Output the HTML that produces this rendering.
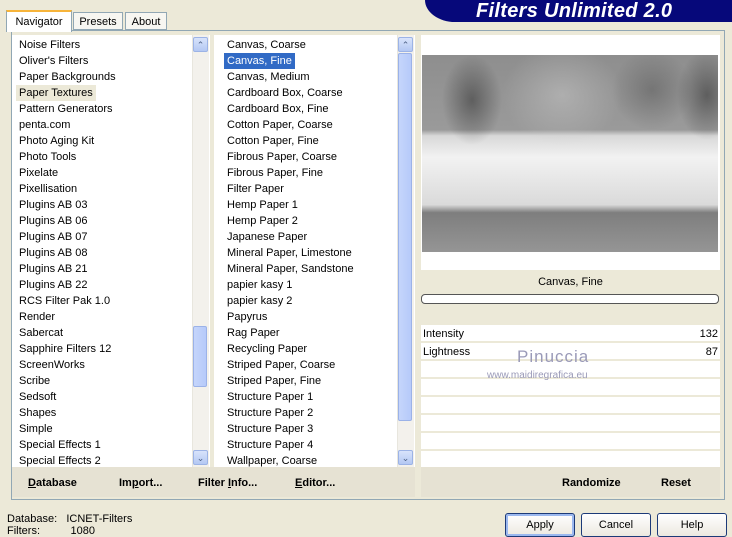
<html><head><style>
body{margin:0;width:732px;height:534px;background:#ECE9D8;position:relative;overflow:hidden;font-family:"Liberation Sans",sans-serif;font-size:11px;color:#000}
.a{position:absolute}
.it{position:absolute;left:0;height:16px;line-height:16px;white-space:nowrap}
.sb{position:absolute;width:16px;background:#F3F1EC;border-left:1px solid #E8E6DE}
.btn{position:absolute;width:15px;height:15px;background:linear-gradient(#d8e3fb,#b4c8f3);border:1px solid #9cb3e6;border-radius:2px;color:#4d6185;font-size:9px;text-align:center;line-height:15px;box-sizing:border-box}
.th{position:absolute;width:14px;background:linear-gradient(90deg,#c5d5fb,#b6cafa);border:1px solid #9bb2e8;border-radius:2px;box-sizing:border-box}
.b{font-weight:bold;position:absolute;top:477px}
.row{position:absolute;left:421px;width:299px;height:16px;background:#fff;border-bottom:2px solid #ECE9D8}
.pb{position:absolute;top:513px;height:24px;width:70px;border:1px solid #1c3a78;border-radius:3px;background:linear-gradient(#fff,#ece9e0);text-align:center;line-height:22px;box-sizing:border-box}
</style></head><body>
<div class="a" style="left:425px;top:0;width:307px;height:22px;background:#06087a;border-bottom-left-radius:30px 22px"></div>
<div class="a" style="left:476px;top:0px;color:#fff;font:italic bold 20px 'Liberation Sans',sans-serif;letter-spacing:0.3px">Filters Unlimited 2.0</div>
<div class="a" style="left:11px;top:30px;width:714px;height:470px;border:1px solid #91A7B4;background:#ECE9D8;box-sizing:border-box"></div>
<div class="a" style="left:6px;top:10px;width:66px;height:22px;background:#fff;border:1px solid #91A7B4;border-bottom:none;border-top:2px solid #F7B43A;text-align:center;line-height:20px;box-sizing:border-box">Navigator</div>
<div class="a" style="left:73px;top:12px;width:50px;height:18px;background:#f7f6f1;border:1px solid #91A7B4;text-align:center;line-height:18px;box-sizing:border-box">Presets</div>
<div class="a" style="left:125px;top:12px;width:42px;height:18px;background:#f7f6f1;border:1px solid #91A7B4;text-align:center;line-height:18px;box-sizing:border-box">About</div>
<div class="a" style="left:12px;top:35px;width:198px;height:432px;background:#fff;overflow:hidden">
<div class="a" style="left:7px;top:2px;width:180px">
<div class="it" style="top:0">Noise Filters</div><div class="it" style="top:16px">Oliver's Filters</div><div class="it" style="top:32px">Paper Backgrounds</div><div class="it" style="top:48px;background:#ECE9D8;padding:0 3px;left:-3px">Paper Textures</div><div class="it" style="top:64px">Pattern Generators</div><div class="it" style="top:80px">penta.com</div><div class="it" style="top:96px">Photo Aging Kit</div><div class="it" style="top:112px">Photo Tools</div><div class="it" style="top:128px">Pixelate</div><div class="it" style="top:144px">Pixellisation</div><div class="it" style="top:160px">Plugins AB 03</div><div class="it" style="top:176px">Plugins AB 06</div><div class="it" style="top:192px">Plugins AB 07</div><div class="it" style="top:208px">Plugins AB 08</div><div class="it" style="top:224px">Plugins AB 21</div><div class="it" style="top:240px">Plugins AB 22</div><div class="it" style="top:256px">RCS Filter Pak 1.0</div><div class="it" style="top:272px">Render</div><div class="it" style="top:288px">Sabercat</div><div class="it" style="top:304px">Sapphire Filters 12</div><div class="it" style="top:320px">ScreenWorks</div><div class="it" style="top:336px">Scribe</div><div class="it" style="top:352px">Sedsoft</div><div class="it" style="top:368px">Shapes</div><div class="it" style="top:384px">Simple</div><div class="it" style="top:400px">Special Effects 1</div><div class="it" style="top:416px">Special Effects 2</div>
</div>
<div class="sb" style="left:180px;top:0;height:432px"></div>
<div class="btn" style="left:181px;top:2px">&#8963;</div>
<div class="th" style="left:181px;top:291px;height:61px"></div>
<div class="btn" style="left:181px;top:415px">&#8964;</div>
</div>
<div class="a" style="left:214px;top:35px;width:201px;height:432px;background:#fff;overflow:hidden">
<div class="a" style="left:13px;top:2px;width:180px">
<div class="it" style="top:0">Canvas, Coarse</div><div class="it" style="top:16px;background:#316AC5;color:#fff;padding:0 3px;left:-3px">Canvas, Fine</div><div class="it" style="top:32px">Canvas, Medium</div><div class="it" style="top:48px">Cardboard Box, Coarse</div><div class="it" style="top:64px">Cardboard Box, Fine</div><div class="it" style="top:80px">Cotton Paper, Coarse</div><div class="it" style="top:96px">Cotton Paper, Fine</div><div class="it" style="top:112px">Fibrous Paper, Coarse</div><div class="it" style="top:128px">Fibrous Paper, Fine</div><div class="it" style="top:144px">Filter Paper</div><div class="it" style="top:160px">Hemp Paper 1</div><div class="it" style="top:176px">Hemp Paper 2</div><div class="it" style="top:192px">Japanese Paper</div><div class="it" style="top:208px">Mineral Paper, Limestone</div><div class="it" style="top:224px">Mineral Paper, Sandstone</div><div class="it" style="top:240px">papier kasy 1</div><div class="it" style="top:256px">papier kasy 2</div><div class="it" style="top:272px">Papyrus</div><div class="it" style="top:288px">Rag Paper</div><div class="it" style="top:304px">Recycling Paper</div><div class="it" style="top:320px">Striped Paper, Coarse</div><div class="it" style="top:336px">Striped Paper, Fine</div><div class="it" style="top:352px">Structure Paper 1</div><div class="it" style="top:368px">Structure Paper 2</div><div class="it" style="top:384px">Structure Paper 3</div><div class="it" style="top:400px">Structure Paper 4</div><div class="it" style="top:416px">Wallpaper, Coarse</div>
</div>
<div class="sb" style="left:183px;top:0;height:432px"></div>
<div class="btn" style="left:184px;top:2px">&#8963;</div>
<div class="th" style="left:184px;top:18px;height:368px"></div>
<div class="btn" style="left:184px;top:415px">&#8964;</div>
</div>
<div class="a" style="left:421px;top:35px;width:299px;height:235px;background:#fff"></div>
<div class="a" style="left:422px;top:55px;width:296px;height:197px;background:
radial-gradient(ellipse 30px 45px at 50px 45px,rgba(40,40,40,.5),transparent),
radial-gradient(ellipse 30px 45px at 285px 40px,rgba(40,40,40,.5),transparent),
radial-gradient(ellipse 40px 40px at 230px 35px,rgba(60,60,60,.35),transparent),
radial-gradient(ellipse 60px 50px at 140px 40px,rgba(200,200,200,.5),transparent),
linear-gradient(#8e8e8e 0,#9a9a9a 38%,#d8d8d8 41%,#f2f2f2 52%,#dadada 76%,#7e7e7e 80%,#959595 100%)"></div>
<div class="a" style="left:421px;top:270px;width:299px;height:55px;background:#ECE9D8"></div>
<div class="a" style="left:421px;top:276px;width:299px;text-align:center">Canvas, Fine</div>
<div class="a" style="left:421px;top:294px;width:298px;height:10px;background:#fff;border:1px solid #555;border-radius:4px;box-sizing:border-box"></div>
<div class="row" style="top:325px"></div><div class="row" style="top:343px"></div><div class="row" style="top:361px"></div><div class="row" style="top:379px"></div><div class="row" style="top:397px"></div><div class="row" style="top:415px"></div><div class="row" style="top:433px"></div><div class="row" style="top:451px"></div>
<div class="a" style="left:423px;top:328px">Intensity</div><div class="a" style="left:690px;top:328px;width:28px;text-align:right">132</div>
<div class="a" style="left:423px;top:346px">Lightness</div><div class="a" style="left:690px;top:346px;width:28px;text-align:right">87</div>
<div class="a" style="left:517px;top:347px;color:#9a9ab8;font-size:17px;letter-spacing:1px">Pinuccia</div>
<div class="a" style="left:487px;top:370px;color:#9a9ab8;font-size:10px">www.maidiregrafica.eu</div>
<div class="a" style="left:12px;top:467px;width:403px;height:30px;background:#E6E2D3"></div>
<div class="a" style="left:421px;top:467px;width:299px;height:30px;background:#E6E2D3"></div>
<div class="b" style="left:28px"><u>D</u>atabase</div>
<div class="b" style="left:119px">Im<u>p</u>ort...</div>
<div class="b" style="left:198px">Filter <u>I</u>nfo...</div>
<div class="b" style="left:295px"><u>E</u>ditor...</div>
<div class="b" style="left:562px">Randomize</div>
<div class="b" style="left:661px">Reset</div>
<div class="a" style="left:7px;top:513px;line-height:12px">Database:&nbsp;&nbsp; ICNET-Filters<br>Filters:&nbsp;&nbsp;&nbsp;&nbsp;&nbsp;&nbsp;&nbsp;&nbsp;&nbsp; 1080</div>
<div class="pb" style="left:505px;border-color:#1c3a78;box-shadow:inset 0 0 0 2px #9bb8ef">Apply</div>
<div class="pb" style="left:581px">Cancel</div>
<div class="pb" style="left:657px">Help</div>
</body></html>
